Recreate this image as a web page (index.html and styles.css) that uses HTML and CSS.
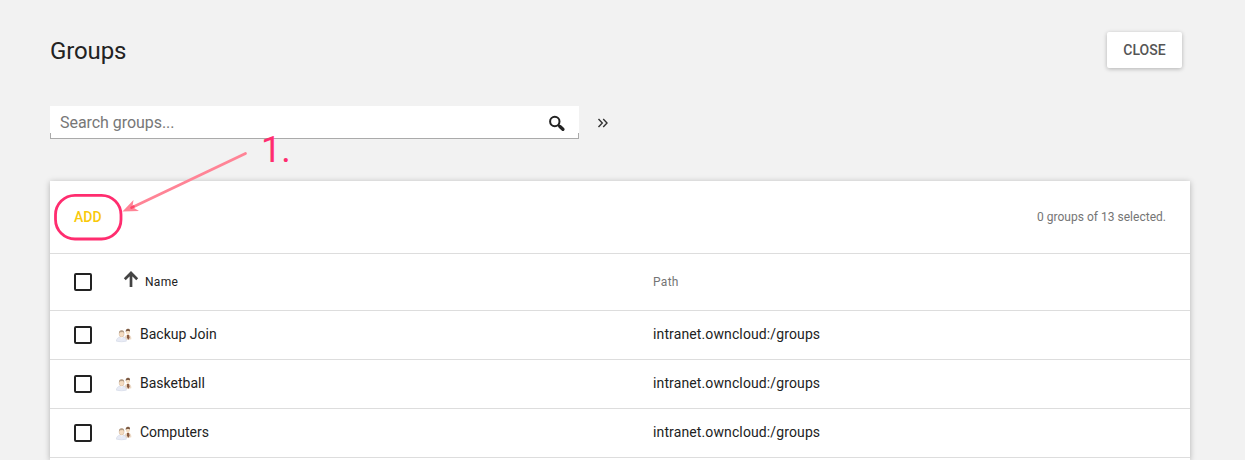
FILE: index.html
```html
<!DOCTYPE html>
<html lang="en">
<head>
<meta charset="utf-8">
<title>Groups</title>
<link rel="stylesheet" href="styles.css">
</head>
<body>
<svg class="defs" width="0" height="0" aria-hidden="true">
  <symbol id="people" viewBox="0 0 16 16">
    <path d="M8.500 13V10.500C9 8.600 10 8 11.800 7.700C14 8 15.200 9 15.300 11V12.200L12 13Z" fill="#ecdac7"/>
    <path d="M11 7.700h2l.6 3-1.200 2-1.500-2Z" fill="#8a5b40"/>
    <ellipse cx="11.900" cy="5.300" rx="1.900" ry="2.400" fill="#f5dfc4"/>
    <path d="M9.700 5C9.500 2.400 11 1.500 12.300 1.800c1.600.2 2 1.600 1.600 3.300l-.6-1.200-2.500.1Z" fill="#7d5b43"/>
    <path d="M.4 14.200C.5 11.600 2 10.500 4.200 10.100H7c2.300.2 3.300 1.600 3.400 4.100Q5.500 15.400.4 14.200Z" fill="#e8ebf5" stroke="#ccd3e3" stroke-width=".5"/>
    <path d="m4.200 10.100 1.500 1.700L7 10.100Z" fill="#fff"/>
    <ellipse cx="5.600" cy="6.900" rx="2.500" ry="3.100" fill="#f4dcc2" stroke="#c9aa8c" stroke-width=".4"/>
    <path d="M3.100 6.500C2.700 4 4.200 3 5.900 3.200c1.800.2 2.600 1.500 2.200 3.300l-.8-1.400-3.200.1Z" fill="#b19a84"/>
  </symbol>
</svg>
<main class="page">
  <header class="header">
    <h1 class="title">Groups</h1>
    <button class="close" type="button">CLOSE</button>
  </header>
  <div class="toolbar">
    <label class="search">
      <input class="search-input" type="text" placeholder="Search groups...">
      <svg class="search-icon" width="18" height="18" viewBox="0 0 18 18"><circle cx="6.800" cy="6.500" r="4.700" fill="none" stroke="#222" stroke-width="2"/><path d="m10.300 10 1.500 1.400" stroke="#222" stroke-width="2"/><path d="m11.900 11.500 3 2.800" stroke="#222" stroke-width="3.400" stroke-linecap="round"/></svg>
    </label>
    <svg class="more" width="12" height="12" viewBox="0 0 12 12"><path d="M1.500 2 5.300 6 1.500 10M6.200 2 10 6 6.200 10" fill="none" stroke="#333" stroke-width="1.400"/></svg>
  </div>
  <section class="card">
    <div class="actions">
      <button class="add" type="button">ADD</button>
      <span class="count">0 groups of 13 selected.</span>
    </div>
    <div class="row head">
      <span class="check"></span>
      <span class="name"><svg class="sort" width="16" height="18" viewBox="0 0 16 18"><path d="M8 17V3M1.800 9.200 8 3l6.200 6.200" fill="none" stroke="#444" stroke-width="2.700"/></svg>Name</span>
      <span class="path">Path</span>
    </div>
    <div class="row">
      <span class="check"></span>
      <span class="name"><svg class="people" width="16" height="16"><use href="#people"/></svg>Backup Join</span>
      <span class="path">intranet.owncloud:/groups</span>
    </div>
    <div class="row">
      <span class="check"></span>
      <span class="name"><svg class="people" width="16" height="16"><use href="#people"/></svg>Basketball</span>
      <span class="path">intranet.owncloud:/groups</span>
    </div>
    <div class="row">
      <span class="check"></span>
      <span class="name"><svg class="people" width="16" height="16"><use href="#people"/></svg>Computers</span>
      <span class="path">intranet.owncloud:/groups</span>
    </div>
  </section>
</main>
<svg class="annotation" width="320" height="250" viewBox="0 0 320 250">
  <rect x="55.500" y="195.300" width="65.500" height="43.700" rx="19.500" fill="none" stroke="#ff2d6f" stroke-width="2.800"/>
  <path d="M245.500 153.500 133 207" fill="none" stroke="#ff8496" stroke-width="2.800" stroke-linecap="round"/>
  <path d="M122.500 211.500 133.500 200 132.400 207 139 211Z" fill="#ff8496"/>
  <path d="m131.500 207.600 2-1" stroke="#ff4769" stroke-width="2.600" stroke-linecap="round"/>
  <text class="step" x="261" y="162">1.</text>
</svg>
</body>
</html>
```
FILE: styles.css
```css
* { box-sizing: border-box; }
body {
  margin: 0;
  background: #f2f2f2;
  color: #222;
  font-family: Roboto, "Liberation Sans", sans-serif;
  font-size: 14px;
}
.defs { position: absolute; }
.page { padding: 32px 55px 0 50px; }
.header {
  display: flex;
  justify-content: space-between;
  align-items: center;
  height: 36px;
  padding-right: 8px;
}
.title {
  margin: 0;
  padding-top: 1px;
  font-size: 24px;
  font-weight: 400;
  line-height: 32px;
  letter-spacing: -.12px;
}
.close {
  width: 75px;
  height: 36px;
  padding: 0;
  border: 0;
  border-radius: 2px;
  background: #fff;
  box-shadow: 0 1px 4px rgba(0, 0, 0, .27);
  color: #555;
  font: 500 14px Roboto, sans-serif;
}
.toolbar { display: flex; align-items: center; gap: 18px; margin-top: 38px; }
.search {
  display: flex;
  align-items: center;
  width: 529px;
  height: 33px;
  padding: 0 13px 0 10px;
  background:
    linear-gradient(#aaa, #aaa) left bottom / 1px 6px no-repeat,
    linear-gradient(#aaa, #aaa) right bottom / 1px 6px no-repeat,
    linear-gradient(#aaa, #aaa) left bottom / 100% 1px no-repeat,
    #fff;
}
.search-input {
  flex: 1;
  min-width: 0;
  padding: 0;
  border: 0;
  outline: 0;
  background: transparent;
  font: 400 16px Roboto, sans-serif;
  letter-spacing: -.05px;
}
.search-input::placeholder { color: #777; }
.search-icon { margin-top: 2px; }
.card {
  width: 1140px;
  margin-top: 42px;
  padding-bottom: 2px;
  background: #fff;
  box-shadow: 0 1px 6px rgba(0, 0, 0, .27);
}
.actions {
  display: flex;
  align-items: center;
  justify-content: space-between;
  height: 73px;
  padding: 0 24px;
  border-bottom: 1px solid #ddd;
}
.add { padding: 0; border: 0; background: none; color: #f9c90b; font: 500 14px Roboto, sans-serif; }
.count { color: #757575; font-size: 12px; letter-spacing: .02px; }
.row {
  display: grid;
  grid-template-columns: 42px 537px 1fr;
  align-items: center;
  height: 49px;
  padding-left: 24px;
  border-bottom: 1px solid #ddd;
}
.check { width: 18px; height: 18px; border: 2px solid #222; border-radius: 2px; }
.name { display: flex; align-items: center; gap: 8px; padding-bottom: 2px; }
.path { padding-bottom: 2px; letter-spacing: .12px; }
.people { position: relative; top: 1px; }
.head { height: 57px; font-size: 12px; }
.head .name { gap: 6px; padding: 0 0 1px 7px; letter-spacing: .3px; }
.head .path { padding-bottom: 1px; color: #757575; letter-spacing: .3px; }
.sort { margin-bottom: 5px; }
.annotation { position: absolute; top: 0; left: 0; pointer-events: none; }
.step { fill: #ff2d6f; font: 36px Roboto, sans-serif; }
```
